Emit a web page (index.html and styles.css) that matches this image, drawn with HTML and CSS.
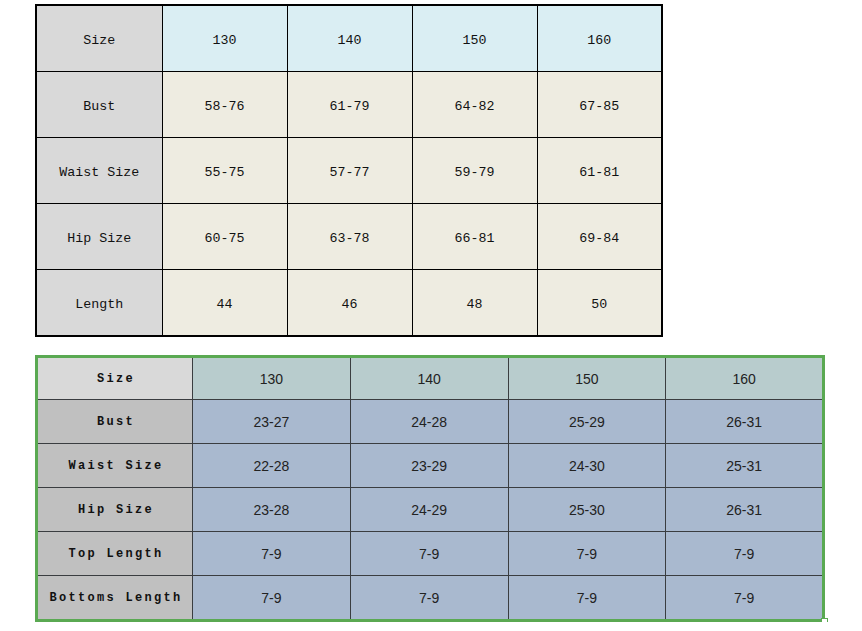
FILE: index.html
```html
<!DOCTYPE html>
<html>
<head>
<meta charset="utf-8">
<link rel="stylesheet" href="styles.css">
</head>
<body>
<div class="page">
  <table class="t1">
    <colgroup><col class="c1"><col><col><col><col></colgroup>
    <tr class="hd"><th>Size</th><td>130</td><td>140</td><td>150</td><td>160</td></tr>
    <tr><th>Bust</th><td>58-76</td><td>61-79</td><td>64-82</td><td>67-85</td></tr>
    <tr><th>Waist Size</th><td>55-75</td><td>57-77</td><td>59-79</td><td>61-81</td></tr>
    <tr><th>Hip Size</th><td>60-75</td><td>63-78</td><td>66-81</td><td>69-84</td></tr>
    <tr><th>Length</th><td>44</td><td>46</td><td>48</td><td>50</td></tr>
  </table>
  <div class="t2wrap">
    <table class="t2">
      <colgroup><col class="c1"><col><col><col><col></colgroup>
      <tr class="hd"><th>Size</th><td>130</td><td>140</td><td>150</td><td>160</td></tr>
      <tr><th>Bust</th><td>23-27</td><td>24-28</td><td>25-29</td><td>26-31</td></tr>
      <tr><th>Waist Size</th><td>22-28</td><td>23-29</td><td>24-30</td><td>25-31</td></tr>
      <tr><th>Hip Size</th><td>23-28</td><td>24-29</td><td>25-30</td><td>26-31</td></tr>
      <tr><th>Top Length</th><td>7-9</td><td>7-9</td><td>7-9</td><td>7-9</td></tr>
      <tr><th>Bottoms Length</th><td>7-9</td><td>7-9</td><td>7-9</td><td>7-9</td></tr>
    </table>
    <div class="handle"></div>
  </div>
</div>
</body>
</html>
```

FILE: styles.css
```css
html, body {
  margin: 0;
  padding: 0;
  background: #ffffff;
}
.page {
  padding: 4px 0 0 35px;
  display: flex;
  flex-direction: column;
  align-items: flex-start;
  gap: 18px;
}
.t1 {
  border-collapse: collapse;
  table-layout: fixed;
  width: 628px;
  border: 2px solid #000;
  font-family: "Liberation Mono", monospace;
  font-size: 13.3px;
  color: #111;
}
.t1 .c1 { width: 126px; }
.t1 th, .t1 td {
  border: 1px solid #000;
  height: 61px;
  padding: 4px 0 0 0;
  text-align: center;
  vertical-align: middle;
  font-weight: normal;
  background: #eeece1;
}
.t1 th { background: #d9d9d9; }
.t1 .hd td { background: #daeef3; }

.t2wrap {
  position: relative;
}
.t2 {
  border-collapse: collapse;
  table-layout: fixed;
  width: 790px;
  border: 3px solid #5aa952;
  font-family: "Liberation Sans", Arial, sans-serif;
  font-size: 14px;
  color: #222;
}
.t2 .c1 { width: 156px; }
.t2 th, .t2 td {
  border: 1px solid #3a3d40;
  height: 43px;
  padding: 0;
  text-align: center;
  vertical-align: middle;
  background: #a9b9cf;
}
.t2 .hd th, .t2 .hd td {
  height: 41px;
}
.t2 th {
  font-family: "Liberation Mono", "Courier New", monospace;
  font-weight: bold;
  font-size: 12px;
  letter-spacing: 2.3px;
  padding-left: 2px;
  background: #c0c0c0;
  color: #111;
}
.t2 .hd th { background: #d9d9d9; }
.t2 .hd td { background: #b8cccd; }
.handle {
  position: absolute;
  right: -3px;
  bottom: -3px;
  width: 5px;
  height: 5px;
  background: #fff;
  border: 1px solid #5aa952;
}
```
